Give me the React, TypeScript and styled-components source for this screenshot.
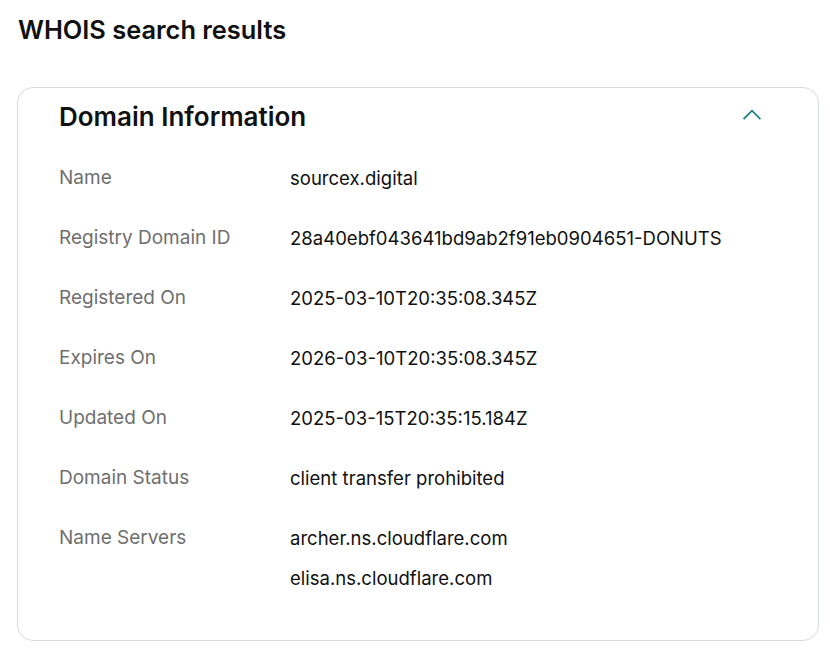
import React from 'react';
import styled, { createGlobalStyle } from 'styled-components';

const GlobalStyle = createGlobalStyle`
  body {
    margin: 0;
    background: #ffffff;
    font-family: Inter, "Noto Sans", sans-serif;
    color: #111111;
  }
`;

const Page = styled.div`
  padding: 14px 11px 0 17px;
`;

const Title = styled.h2`
  margin: 0 0 41px 1px;
  font-size: 25.4px;
  line-height: 32px;
  font-weight: 600;
  color: #111111;
`;

const Card = styled.section`
  border: 1px solid #d6dce1;
  border-radius: 16px;
  padding: 0 57px 32px 41px;
`;

const Header = styled.div`
  display: flex;
  align-items: center;
  justify-content: space-between;
  height: 57px;
  margin-bottom: 3px;
`;

const CardTitle = styled.h3`
  margin: 0;
  font-size: 26px;
  font-weight: 600;
  color: #111111;
`;

const Toggle = styled.button`
  border: none;
  background: none;
  padding: 0;
  margin-bottom: 5px;
  width: 18px;
  height: 20px;
  display: flex;
  align-items: center;
  justify-content: center;
  color: #1a7f80;
  cursor: pointer;
`;

const Row = styled.div`
  display: grid;
  grid-template-columns: 231px 1fr;
  padding: 20px 0;
`;

const Label = styled.div`
  font-size: 19px;
  line-height: 20px;
  color: #6f6f6f;
`;

const Values = styled.div`
  display: flex;
  flex-direction: column;
  gap: 20px;
`;

const Value = styled.div`
  font-size: 18.55px;
  line-height: 20px;
  color: #111111;
`;

const rows: { label: string; values: string[] }[] = [
  { label: 'Name', values: ['sourcex.digital'] },
  { label: 'Registry Domain ID', values: ['28a40ebf043641bd9ab2f91eb0904651-DONUTS'] },
  { label: 'Registered On', values: ['2025-03-10T20:35:08.345Z'] },
  { label: 'Expires On', values: ['2026-03-10T20:35:08.345Z'] },
  { label: 'Updated On', values: ['2025-03-15T20:35:15.184Z'] },
  { label: 'Domain Status', values: ['client transfer prohibited'] },
  { label: 'Name Servers', values: ['archer.ns.cloudflare.com', 'elisa.ns.cloudflare.com'] },
];

const App: React.FC = () => {
  return (
    <Page>
      <GlobalStyle />
      <Title>WHOIS search results</Title>
      <Card>
        <Header>
          <CardTitle>Domain Information</CardTitle>
          <Toggle aria-label="Collapse">
            <svg width="18" height="11" viewBox="0 0 18 11" fill="none">
              <path d="M1.2 9.5 L9 1.7 L16.8 9.5" stroke="currentColor" strokeWidth="1.8" strokeLinecap="square" strokeLinejoin="miter" />
            </svg>
          </Toggle>
        </Header>
        {rows.map((r) => (
          <Row key={r.label}>
            <Label>{r.label}</Label>
            <Values>
              {r.values.map((v) => (
                <Value key={v}>{v}</Value>
              ))}
            </Values>
          </Row>
        ))}
      </Card>
    </Page>
  );
};

export default App;
